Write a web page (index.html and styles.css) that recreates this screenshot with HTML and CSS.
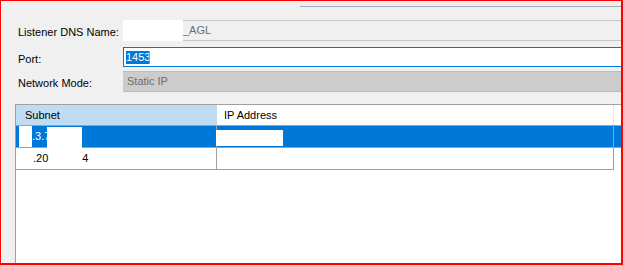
FILE: index.html
```html
<!DOCTYPE html>
<html>
<head>
<meta charset="utf-8">
<link rel="stylesheet" href="styles.css">
</head>
<body>
<div class="frame">
  <div class="topline"></div>
  <div class="form-row r1">
    <label class="label">Listener DNS Name:</label>
    <div class="field ro"><span class="redact"></span><span class="val">_AGL</span></div>
  </div>
  <div class="form-row r2">
    <label class="label">Port:</label>
    <div class="field focus"><span class="sel">1453</span><span class="caret"></span></div>
  </div>
  <div class="form-row r3">
    <label class="label">Network Mode:</label>
    <div class="field disabled"><span class="val">Static IP</span></div>
  </div>
  <div class="listview">
    <div class="lv-head">
      <div class="th c1 hot">Subnet</div>
      <div class="th c2">IP Address</div>
      <div class="th c3"></div>
    </div>
    <div class="lv-row selected">
      <div class="td c1 pad1"><span class="mask mask-a"></span>.3.7<span class="mask mask-b"></span></div>
      <div class="td c2"><span class="mask mask-c"></span></div>
      <div class="td c3"></div>
    </div>
    <div class="lv-row">
      <div class="td c1 pad2 last">.20<span class="gap">4</span></div>
      <div class="td c2 last"></div>
      <div class="td c3"></div>
    </div>
  </div>
</div>
</body>
</html>
```
FILE: styles.css
```css
* { box-sizing: border-box; }
html, body { margin: 0; padding: 0; }
body {
  font-family: "Liberation Sans", Arial, sans-serif;
  font-size: 11px;
  color: #000;
  background: #fff;
}
.frame {
  width: 623px;
  height: 265px;
  border: 1px solid #ff0000;
  border-right-width: 2px;
  border-bottom-width: 2px;
  background: #f0f0f0;
  box-shadow: inset 1px 0 0 #fbfbfb;
  overflow: hidden;
  display: flex;
  flex-direction: column;
}
.topline {
  flex: none;
  height: 1px;
  margin: 5px 0 0 299px;
  background: #a9a9b1;
}
.form-row { display: flex; flex: none; }
.r1 { margin-top: 13px; }
.r2 { margin-top: 6px; }
.r3 { margin-top: 4px; }
.label {
  flex: none;
  width: 122px;
  padding: 6px 0 0 17px;
  line-height: 13px;
}
.field {
  flex: none;
  width: 560px;
  display: flex;
  align-items: center;
  line-height: 13px;
  white-space: nowrap;
}
.ro {
  height: 21px;
  border-top: 1px solid #c8c8c8;
  border-bottom: 1px solid #c8c8c8;
  background: #f0f0f0;
  color: #6d6d6d;
}
.ro .redact {
  align-self: stretch;
  width: 60px;
  margin: -1px 0;
  background: #fff;
}
.focus {
  height: 20px;
  border: 1px solid #0078d7;
  border-right: none;
  background: #fff;
  padding-left: 2px;
}
.sel { background: #0078d7; color: #fff; }
.caret {
  width: 1px;
  height: 13px;
  margin-left: -1px;
  background: #f58a2a;
}
.disabled {
  height: 21px;
  border-top: 1px solid #bdbdbd;
  border-bottom: 1px solid #bdbdbd;
  background: #cccccc;
  color: #6d6d6d;
  padding-left: 4px;
}
.listview {
  flex: 1;
  width: 640px;
  margin: 12px 0 0 14px;
  border-top: 1px solid #a0a0a0;
  border-left: 1px solid #a0a0a0;
  background: #fff;
}
.lv-head { display: flex; height: 20px; }
.th {
  height: 20px;
  padding-top: 1px;
  line-height: 19px;
  white-space: nowrap;
}
.c1 { flex: none; width: 201px; }
.c2 { flex: none; width: 397px; }
.c3 { flex: 1; }
.th.c1 { padding-left: 9px; }
.th.c2 { padding-left: 7px; border-right: 1px dotted #d4d4d4; }
.th.hot { background: #bfdcf3; }
.lv-row { display: flex; border-top: 1px solid #a0a0a0; }
.td {
  height: 21px;
  line-height: 21px;
  position: relative;
  white-space: nowrap;
}
.td.c1 { border-right: 1px solid #a0a0a0; }
.td.c2 { border-right: 1px solid #a0a0a0; }
.td.last { height: 22px; border-bottom: 1px solid #a0a0a0; }
.selected { background: #0078d7; color: #fff; }
.pad1 { padding-left: 16px; }
.pad2 { padding-left: 17px; }
.gap { margin-left: 34px; }
.mask { position: absolute; background: #fff; z-index: 1; }
.mask-a { left: 3px; top: 0; width: 13px; height: 21px; }
.mask-b { left: 31px; top: 1px; width: 35px; height: 21px; }
.mask-c { left: -1px; top: 4px; width: 67px; height: 16px; }
```
